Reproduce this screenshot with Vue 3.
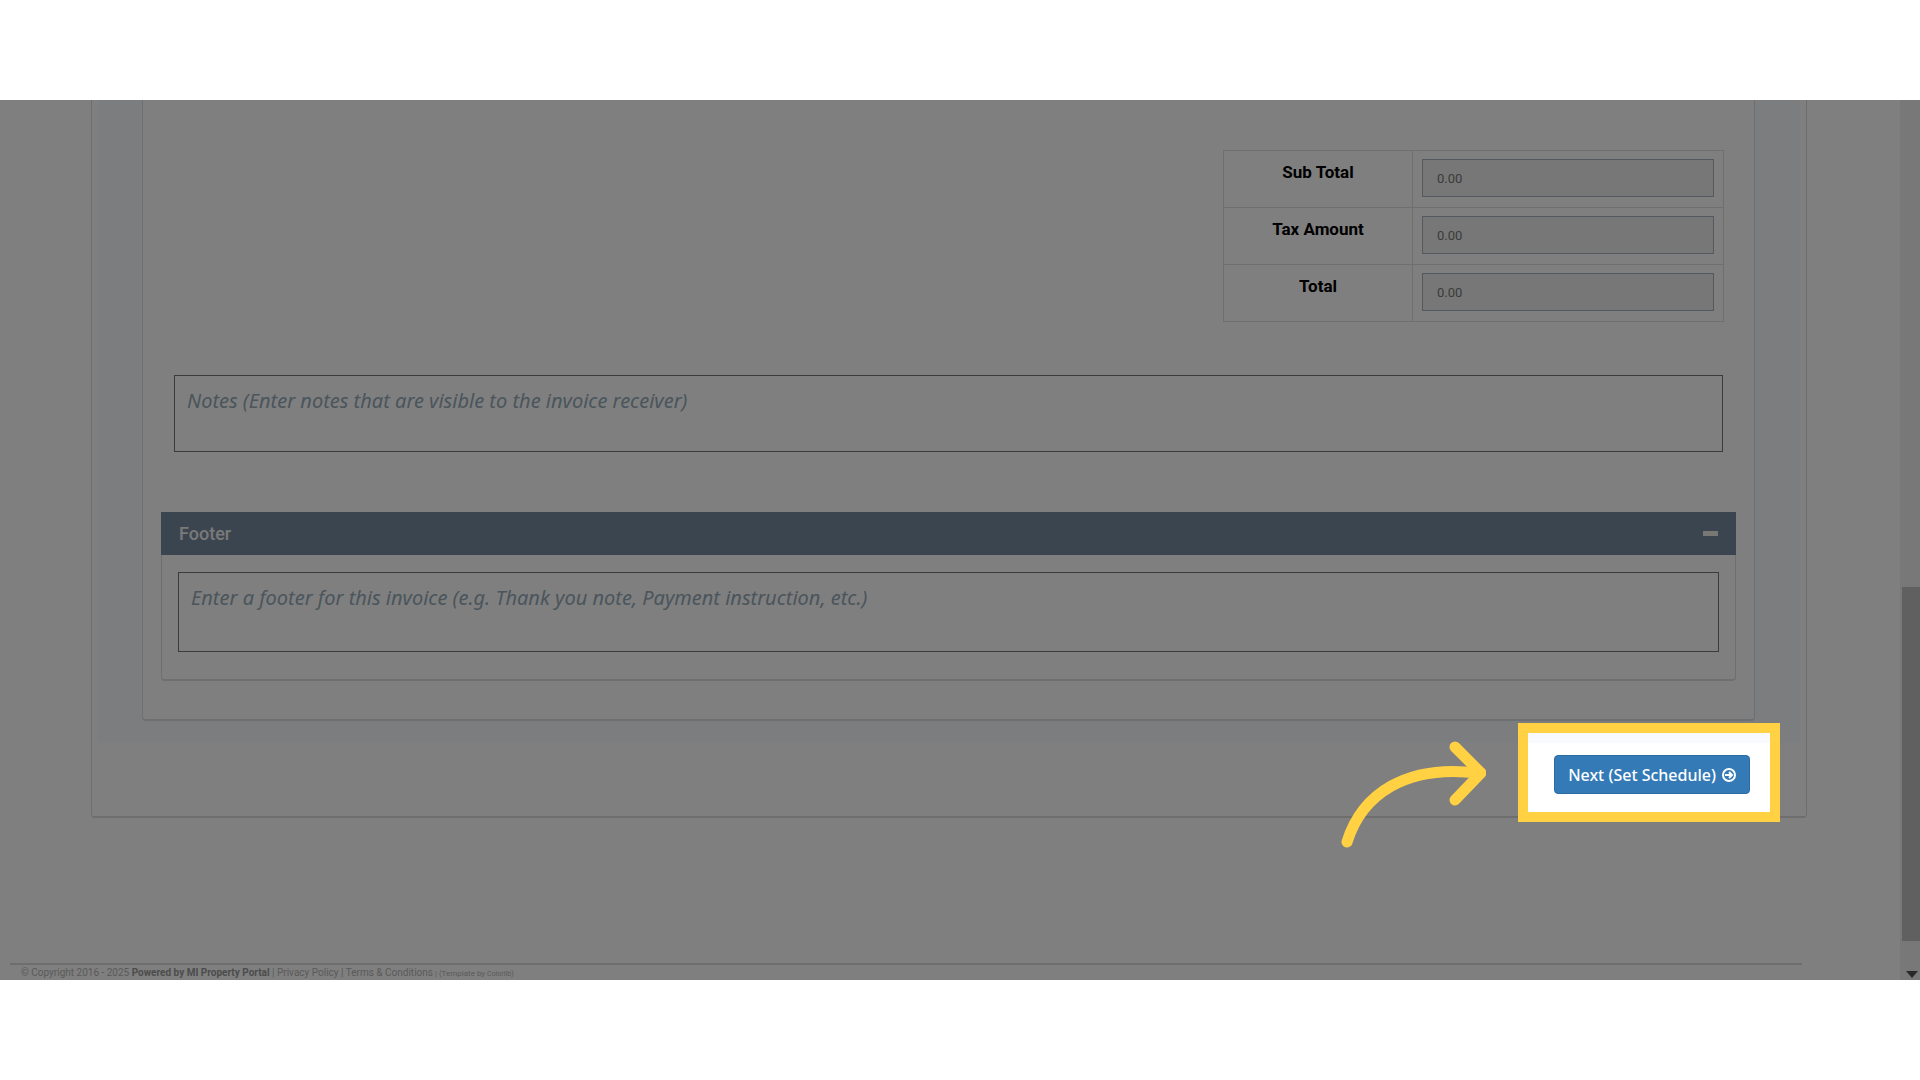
<script setup>
const totals = [
  { id: 'sub-total', label: 'Sub Total', value: '0.00' },
  { id: 'tax-amount', label: 'Tax Amount', value: '0.00' },
  { id: 'total', label: 'Total', value: '0.00' },
]
</script>

<template>
  <div class="stage">
    <div class="screen">
      <main class="content">
        <section class="wizard">
          <div class="wizard-body">
            <div class="invoice">
              <table class="totals">
                <tbody>
                  <tr v-for="row in totals" :key="row.id">
                    <th scope="row"><label :for="row.id">{{ row.label }}</label></th>
                    <td><input :id="row.id" type="text" :value="row.value" readonly /></td>
                  </tr>
                </tbody>
              </table>

              <textarea
                class="note notes"
                aria-label="Notes"
                placeholder="Notes (Enter notes that are visible to the invoice receiver)"
              ></textarea>

              <section class="panel">
                <header class="panel-head">
                  <h2>Footer</h2>
                  <button class="collapse" type="button" aria-label="Collapse"></button>
                </header>
                <div class="panel-body">
                  <textarea
                    class="note"
                    aria-label="Footer"
                    placeholder="Enter a footer for this invoice (e.g. Thank you note, Payment instruction, etc.)"
                  ></textarea>
                </div>
              </section>
            </div>
          </div>

          <div class="actions">
            <div class="action">
              <button class="next" type="button">
                Next (Set Schedule)
                <svg width="14" height="14" viewBox="0 0 14 14" fill="none" stroke="currentColor" stroke-width="2">
                  <circle cx="7" cy="7" r="6" />
                  <path d="M3 7h7M7 4l3 3-3 3" />
                </svg>
              </button>
              <div class="spotlight"></div>
              <svg class="pointer" width="146" height="108" viewBox="0 0 146 108" fill="none" stroke="#ffd143" stroke-width="11" stroke-linecap="round" stroke-linejoin="round">
                <path d="M7 102C22 54 66 24 138 33" />
                <path d="M115 7L141 33L115 60" />
              </svg>
            </div>
          </div>
        </section>

        <footer class="site-footer">
          © Copyright 2016 - 2025 <strong>Powered by MI Property Portal</strong> |
          <a href="#">Privacy Policy</a> | <a href="#">Terms &amp; Conditions</a>
          <small> | (Template by <a class="tiny" href="#">Colorlib</a>)</small>
        </footer>
      </main>

      <div class="scrollbar" aria-hidden="true">
        <div class="thumb"></div>
        <div class="arrow"></div>
      </div>
    </div>
  </div>
</template>

<style>
body {
  margin: 0;
  background: #fff;
}
</style>

<style scoped>
* {
  box-sizing: border-box;
}
.stage {
  padding: 100px 0;
}
.screen {
  position: relative;
  display: flex;
  overflow: hidden;
  background: #fff;
  font-family: Roboto, sans-serif;
}
.content {
  flex: 1;
  min-width: 0;
  padding: 0 98px 0 10px;
}
.wizard {
  margin: 0 -5px 0 81px;
  padding: 0 6px;
  border: 1px solid #dcdcdc;
  border-top: 0;
  border-bottom-width: 2px;
  border-radius: 0 0 4px 4px;
}
.wizard-body {
  padding: 0 45px 22px 44px;
  background: #f8fafd;
}
.invoice {
  padding: 50px 18px 38px;
  border: 1px solid #dcdfe2;
  border-top: 0;
  border-bottom-width: 2px;
  border-radius: 0 0 4px 4px;
  background: #fff;
}
.totals {
  width: 501px;
  margin: 0 12px 0 auto;
  border-collapse: collapse;
  table-layout: fixed;
}
.totals th,
.totals td {
  height: 57px;
  padding: 8px 9px 10px;
  border: 1px solid #dedede;
}
.totals th {
  width: 189px;
  vertical-align: top;
  padding-top: 11px;
  color: #000;
  font-size: 17px;
  font-weight: 700;
  line-height: 20px;
}
.totals input {
  display: block;
  width: 100%;
  height: 38px;
  padding: 0 14px;
  border: 1px solid #a8b2be;
  background: #eee;
  color: #777;
  font: 13px/20px Roboto, sans-serif;
}
.note {
  display: block;
  width: 100%;
  height: 80px;
  padding: 12px;
  border: 1px solid #777;
  background: transparent;
  font: italic 20px/26px "Noto Sans", sans-serif;
  resize: none;
}
.note::placeholder {
  color: #94aab8;
  opacity: 1;
}
.notes {
  width: calc(100% - 26px);
  height: 77px;
  margin: 53px 13px 60px;
}
.panel {
  border: 1px solid #dedede;
  border-top: 0;
  border-bottom-width: 2px;
  border-radius: 0 0 4px 4px;
}
.panel-head {
  display: flex;
  align-items: center;
  justify-content: space-between;
  height: 43px;
  margin: 0 -1px;
  padding: 0 18px;
  background: #768a9e;
}
.panel-head h2 {
  margin: 0;
  color: #f2f2f2;
  font-size: 18px;
  font-weight: 500;
}
.collapse {
  width: 15px;
  height: 5px;
  padding: 0;
  border: 0;
  background: #f4f0ea;
}
.panel-body {
  padding: 17px 16px 27px;
}
.actions {
  display: flex;
  justify-content: flex-end;
  padding: 12px 50px 22px;
}
.action {
  position: relative;
}
.next {
  display: flex;
  align-items: center;
  gap: 6px;
  height: 39px;
  padding: 0 13px;
  border: 1px solid #2e6da4;
  border-radius: 4px;
  background: #337ab7;
  color: #fff;
  font: 500 16px/22px "Noto Sans", sans-serif;
  white-space: nowrap;
}
.spotlight {
  position: absolute;
  z-index: 1;
  inset: -32px -30px -28px -36px;
  border: 10px solid #ffd143;
  box-shadow: 0 0 0 3000px rgba(0, 0, 0, 0.5);
  pointer-events: none;
}
.pointer {
  position: absolute;
  z-index: 2;
  right: calc(100% + 68px);
  top: -15px;
}
.site-footer {
  margin-top: 145px;
  padding: 1px 11px 0;
  border-top: 2px solid #dcdcdc;
  color: #b4b4b4;
  font-size: 10px;
  line-height: 14px;
  white-space: nowrap;
}
.site-footer strong {
  color: #989898;
}
.site-footer a {
  color: inherit;
  text-decoration: none;
}
.site-footer small {
  font-size: 8px;
  line-height: 10px;
}
.site-footer .tiny {
  font-size: 7px;
}
.scrollbar {
  display: flex;
  flex-direction: column;
  width: 20px;
  padding: 487px 0 0 2px;
  background: #f1f1f1;
}
.thumb {
  height: 354px;
  background: #c1c1c1;
}
.arrow {
  width: 12px;
  height: 7px;
  margin: 30px 0 0 4px;
  background: #505050;
  clip-path: polygon(0 0, 100% 0, 50% 100%);
}
</style>
